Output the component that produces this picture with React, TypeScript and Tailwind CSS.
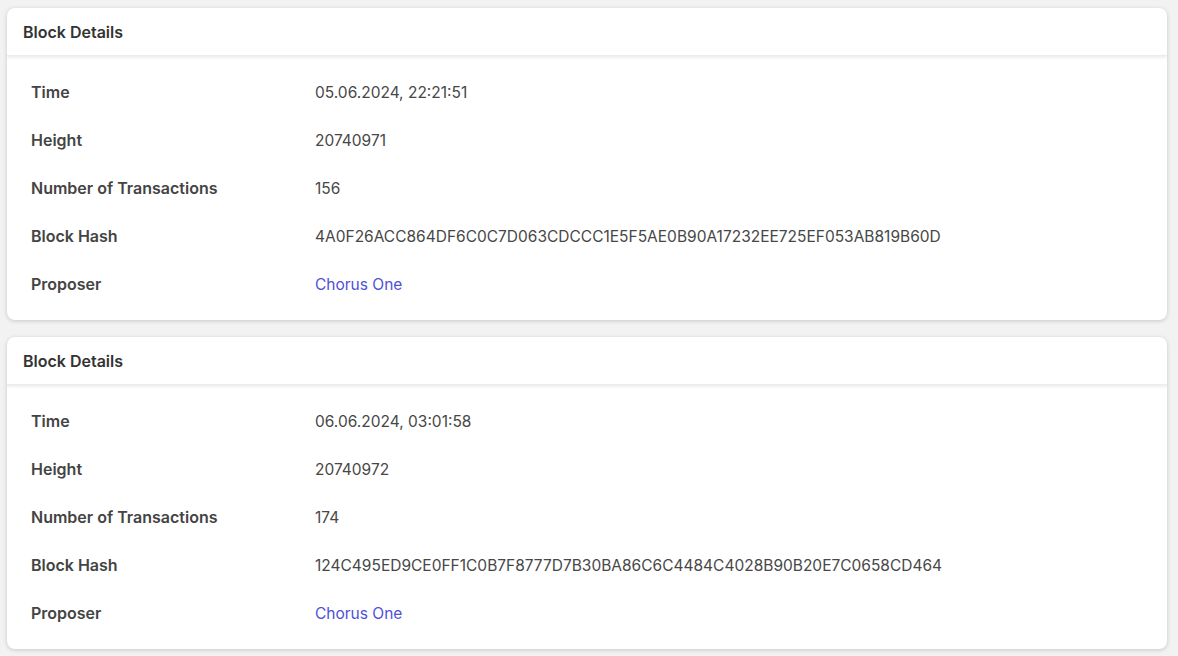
import React from 'react';

interface Row {
  label: string;
  value: string;
  link?: boolean;
}

const blocks: Row[][] = [
  [
    { label: 'Time', value: '05.06.2024, 22:21:51' },
    { label: 'Height', value: '20740971' },
    { label: 'Number of Transactions', value: '156' },
    { label: 'Block Hash', value: '4A0F26ACC864DF6C0C7D063CDCCC1E5F5AE0B90A17232EE725EF053AB819B60D' },
    { label: 'Proposer', value: 'Chorus One', link: true },
  ],
  [
    { label: 'Time', value: '06.06.2024, 03:01:58' },
    { label: 'Height', value: '20740972' },
    { label: 'Number of Transactions', value: '174' },
    { label: 'Block Hash', value: '124C495ED9CE0FF1C0B7F8777D7B30BA86C6C4484C4028B90B20E7C0658CD464' },
    { label: 'Proposer', value: 'Chorus One', link: true },
  ],
];

const BlockCard: React.FC<{ rows: Row[] }> = ({ rows }) => (
  <div className="w-[1160px] bg-white rounded-lg shadow-[0_1px_4px_rgba(0,0,0,0.18)] overflow-hidden">
    <div className="h-12 flex items-center px-4 shadow-[0_2px_3px_rgba(0,0,0,0.07)] border-b border-[#ececec] relative">
      <h2 className="text-[16px] font-semibold text-[#333]">Block Details</h2>
    </div>
    <div className="py-3 px-6">
      {rows.map((r) => (
        <div key={r.label} className="h-12 flex items-center">
          <div className="w-[284px] text-[16px] font-semibold text-[#444]">{r.label}</div>
          {r.link ? (
            <a href="#" className="mt-[2px] text-[15.5px] text-[#5050d8]">{r.value}</a>
          ) : (
            <div className="mt-[2px] text-[15.5px] text-[#474747]">{r.value}</div>
          )}
        </div>
      ))}
    </div>
  </div>
);

const App: React.FC = () => (
  <div className="min-h-screen bg-[#f2f2f2] pt-2 pl-[7px] flex flex-col gap-[17px] font-['Inter',sans-serif]">
    {blocks.map((rows, i) => (
      <BlockCard key={i} rows={rows} />
    ))}
  </div>
);

export default App;
